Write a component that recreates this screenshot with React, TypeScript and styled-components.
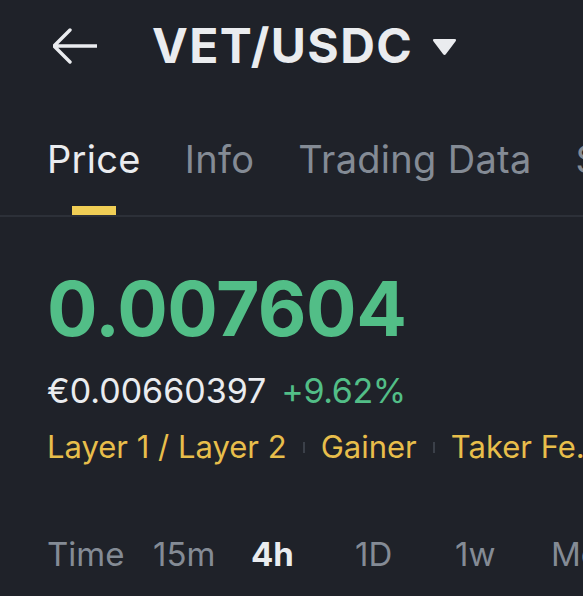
import { FC, Fragment } from "react";
import styled, { createGlobalStyle } from "styled-components";

const GlobalStyle = createGlobalStyle`
  html, body {
    margin: 0;
    padding: 0;
    background: #1f2229;
  }
  body {
    font-family: Inter, "Noto Sans", sans-serif;
    color: #eaecef;
    overflow: hidden;
  }
`;

const Page = styled.main`
  width: 583px;
  height: 596px;
  overflow: hidden;
  white-space: nowrap;
  background: #1f2229;
`;

const Header = styled.header`
  display: flex;
  align-items: center;
  height: 92px;
  padding-left: 53px;
`;

const BackIcon = styled.svg`
  width: 44px;
  height: 36px;
  flex-shrink: 0;
`;

const Title = styled.h1`
  margin: 0 0 0 55px;
  font-size: 48px;
  line-height: 92px;
  font-weight: 700;
  letter-spacing: 1.4px;
  color: #eaecef;
`;

const Caret = styled.svg`
  width: 25px;
  height: 18px;
  margin-left: 19px;
  margin-top: 2px;
`;

const TabBar = styled.nav`
  display: flex;
  gap: 44px;
  margin-top: 37px;
  padding-left: 47px;
  border-bottom: 2px solid #2c3038;
`;

const Tab = styled.div<{ $active?: boolean }>`
  display: flex;
  flex-direction: column;
  align-items: center;
  flex-shrink: 0;
  font-size: 38px;
  line-height: 60px;
  letter-spacing: 0.3px;
  color: ${(p) => (p.$active ? "#eaecef" : "#848b95")};
  &::after {
    content: "";
    display: block;
    width: 44px;
    height: 9px;
    margin-top: 17px;
    background: ${(p) => (p.$active ? "#f0ce55" : "transparent")};
  }
`;

const PriceBlock = styled.section`
  padding-left: 47px;
`;

const LastPrice = styled.div`
  margin-top: 52px;
  font-size: 75px;
  line-height: 80px;
  font-weight: 700;
  letter-spacing: -0.5px;
  color: #52be87;
`;

const SubLine = styled.div`
  display: flex;
  gap: 15px;
  margin-top: 22px;
  font-size: 34px;
  line-height: 40px;
`;

const Fiat = styled.span`
  color: #eaecef;
`;

const Change = styled.span`
  color: #52be87;
  letter-spacing: -0.4px;
`;

const Tags = styled.div`
  display: flex;
  align-items: center;
  gap: 16px;
  margin-top: 16px;
  font-size: 31px;
  line-height: 40px;
  color: #e8be4b;
`;

const Tag = styled.span`
  flex-shrink: 0;
`;

const TagDivider = styled.span`
  flex-shrink: 0;
  width: 2px;
  height: 11px;
  background: #3b4049;
`;

const Intervals = styled.div`
  display: grid;
  grid-template-columns: 106px 98px 104px 100px 96px auto;
  margin-top: 67px;
  padding-left: 47px;
  font-size: 33px;
  line-height: 40px;
`;

const Interval = styled.span<{ $active?: boolean }>`
  color: ${(p) => (p.$active ? "#eaecef" : "#848b95")};
  font-weight: ${(p) => (p.$active ? 700 : 400)};
`;

const tabs = ["Price", "Info", "Trading Data", "Square"];
const tags = ["Layer 1 / Layer 2", "Gainer", "Taker Fe.."];
const intervals = ["Time", "15m", "4h", "1D", "1w", "More"];

const App: FC = () => {
  return (
    <>
      <GlobalStyle />
      <Page>
        <Header>
          <BackIcon viewBox="0 0 44 36" fill="none">
            <path
              d="M17 2 L1 18 L17 34 M1 18 H44"
              stroke="#eaecef"
              strokeWidth="3.4"
              strokeLinecap="round"
              strokeLinejoin="round"
            />
          </BackIcon>
          <Title>VET/USDC</Title>
          <Caret viewBox="0 0 25 18">
            <path
              d="M2.5 1 H22.5 Q25 1 23.6 3.2 L14 16 Q12.5 18 11 16 L1.4 3.2 Q0 1 2.5 1 Z"
              fill="#eaecef"
            />
          </Caret>
        </Header>
        <TabBar>
          {tabs.map((t, i) => (
            <Tab key={t} $active={i === 0}>
              {t}
            </Tab>
          ))}
        </TabBar>
        <PriceBlock>
          <LastPrice>0.007604</LastPrice>
          <SubLine>
            <Fiat>€0.00660397</Fiat>
            <Change>+9.62%</Change>
          </SubLine>
          <Tags>
            {tags.map((t, i) => (
              <Fragment key={t}>
                {i > 0 && <TagDivider />}
                <Tag>{t}</Tag>
              </Fragment>
            ))}
          </Tags>
        </PriceBlock>
        <Intervals>
          {intervals.map((t) => (
            <Interval key={t} $active={t === "4h"}>
              {t}
            </Interval>
          ))}
        </Intervals>
      </Page>
    </>
  );
};

export default App;
